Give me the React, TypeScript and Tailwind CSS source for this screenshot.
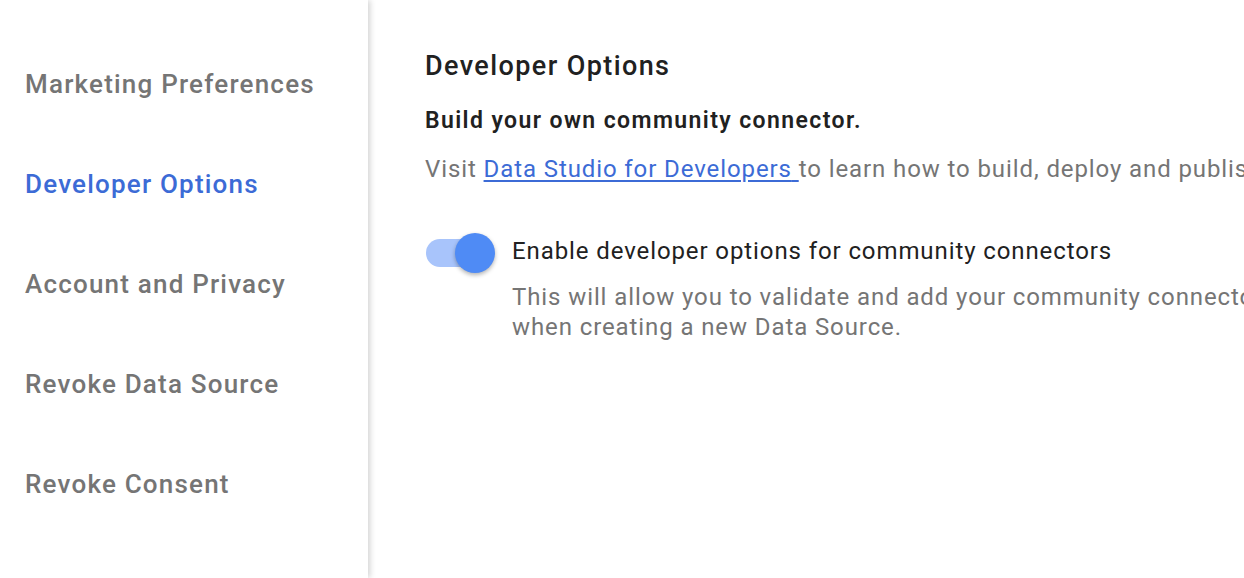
const navItems = [
  "Marketing Preferences",
  "Developer Options",
  "Account and Privacy",
  "Revoke Data Source",
  "Revoke Consent",
];

function Toggle() {
  return (
    <div className="relative h-[40px] w-[72px] shrink-0">
      <div className="absolute left-[1px] top-[6px] h-[28px] w-[62px] rounded-full bg-[#a8c4fb]" />
      <div className="absolute left-[30px] top-0 h-[40px] w-[40px] rounded-full bg-[#4f8bf5] shadow-[0_2px_4px_rgba(0,0,0,0.3)]" />
    </div>
  );
}

export default function App() {
  return (
    <div className="flex h-[578px] w-[1244px] overflow-hidden bg-white font-['Roboto',sans-serif]">
      <nav className="relative z-10 flex w-[368px] shrink-0 flex-col bg-white pt-[66px] shadow-[2px_0_6px_rgba(0,0,0,0.18)]">
        {navItems.map((item) => (
          <div
            key={item}
            className={`flex h-[100px] items-start pl-[25px] text-[26px] font-medium leading-[37px] tracking-[1.2px] ${
              item === "Developer Options" ? "text-[#3c6bd6]" : "text-[#757575]"
            }`}
          >
            {item}
          </div>
        ))}
      </nav>
      <main className="flex-1 whitespace-nowrap pl-[57px] pt-[48px]">
        <h1 className="text-[27px] font-medium leading-[36px] tracking-[1.4px] text-[#212121]">
          Developer Options
        </h1>
        <p className="mt-[21px] text-[23px] font-semibold leading-[32px] tracking-[1.4px] text-[#212121]">
          Build your own community connector.
        </p>
        <p className="mt-[16px] text-[24px] leading-[32px] tracking-[0.9px] text-[#757575]">
          Visit{" "}
          <a href="#" className="text-[#3c6bd6] underline underline-offset-[3px]">
            Data Studio for Developers{" "}
          </a>
          to learn how to build, deploy and publish community connectors.
        </p>
        <div className="mt-[48px] flex items-start gap-[15px]">
          <Toggle />
          <div>
            <div className="text-[24px] leading-[36px] tracking-[0.9px] text-[#212121]">
              Enable developer options for community connectors
            </div>
            <div className="mt-[13px] text-[24px] leading-[30px] tracking-[0.9px] text-[#757575]">
              This will allow you to validate and add your community connectors
              <br />
              when creating a new Data Source.
            </div>
          </div>
        </div>
      </main>
    </div>
  );
}
